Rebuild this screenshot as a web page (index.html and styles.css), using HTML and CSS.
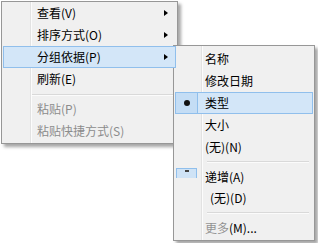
FILE: index.html
```html
<!DOCTYPE html>
<html lang="zh-CN">
<head>
    <meta charset="UTF-8">
    <title>分组依据</title>
    <link rel="stylesheet" href="styles.css">
</head>
<body>
    <!-- Menu principal -->
    <div class="menu main">
        <div class="item"><span>查看(V)</span><span class="arrow"></span></div>
        <div class="item"><span>排序方式(O)</span><span class="arrow"></span></div>
        <div class="item active"><span>分组依据(P)</span><span class="arrow"></span></div>
        <div class="item"><span>刷新(E)</span></div>
        <div class="sep"></div>
        <div class="item disabled"><span>粘贴(P)</span></div>
        <div class="item disabled"><span>粘贴快捷方式(S)</span></div>
    </div>

    <!-- Submenu -->
    <div class="menu sub">
        <div class="item"><span>名称</span></div>
        <div class="item"><span>修改日期</span></div>
        <div class="item active checked"><span class="check"><i class="dot"></i></span><span>类型</span></div>
        <div class="item"><span>大小</span></div>
        <div class="item"><span>(无)(N)</span></div>
        <div class="sep"></div>
        <div class="item low"><span class="ghost-check"></span><span>递增(A)</span></div>
        <div class="item shifted"><span>(无)(D)</span></div>
        <div class="sep"></div>
        <div class="item low"><span class="faded">更多</span><span>(M)...</span></div>
    </div>
</body>
</html>
```

FILE: styles.css
```css
body {
    margin: 0;
    width: 318px;
    height: 243px;
    overflow: hidden;
    position: relative;
    background: #fff;
    font-family: "Noto Sans CJK SC", "Noto Sans", sans-serif;
    font-size: 12px;
    color: #000;
}

/* Menus */
.menu {
    position: relative;
    background: #f0f0f0;
    border: 1px solid #979797;
    box-shadow: 3px 3px 3px rgba(0, 0, 0, 0.35);
    box-sizing: border-box;
}

.menu::before {
    content: "";
    position: absolute;
    top: 0;
    bottom: 0;
    width: 1px;
    background: #e2e2e2;
    border-right: 1px solid #fcfcfc;
}

.main {
    margin: 1px 0 0 1px;
    width: 177px;
    padding: 0 0 1px;
}

.main::before {
    left: 28px;
}

.sub {
    position: absolute;
    left: 173px;
    top: 45px;
    width: 142px;
    padding: 2px 0;
}

.sub::before {
    left: 27px;
}

.item {
    position: relative;
    height: 22px;
    margin: 0 1px;
    padding-left: 33px;
    border: 1px solid transparent;
    box-sizing: border-box;
    display: flex;
    align-items: center;
    white-space: nowrap;
    line-height: 1;
    z-index: 1;
}

.sub .item {
    padding-left: 29px;
}

.item.active {
    background: #d3e6f8;
    border-color: #90bfec;
}

.item.disabled {
    color: #8c8c8c;
}

.arrow {
    margin-left: auto;
    margin-right: 7px;
    width: 0;
    height: 0;
    border-left: 4px solid #000;
    border-top: 3.5px solid transparent;
    border-bottom: 3.5px solid transparent;
}

/* Separadores */
.sep {
    position: relative;
    height: 8px;
    z-index: 1;
}

.sep::after {
    content: "";
    position: absolute;
    top: 4px;
    left: 30px;
    right: 4px;
    height: 1px;
    background: #d9d9d9;
    border-bottom: 1px solid #fbfbfb;
}

.sub .sep {
    height: 7px;
}

.sub .sep::after {
    top: 3px;
    left: 33px;
    right: 5px;
}

/* Marca de seleção */
.check {
    position: absolute;
    left: -1px;
    top: -1px;
    bottom: -1px;
    width: 21px;
    border: 1px solid #90bfec;
    background: #c4ddf5;
    display: flex;
    align-items: center;
    justify-content: center;
}

.dot {
    width: 6px;
    height: 6px;
    border-radius: 50%;
    background: #111;
}

.ghost-check {
    position: absolute;
    left: 0;
    top: 2px;
    width: 19px;
    height: 9px;
    background: #cfe3f6;
    border: 1px solid #90bfec;
    border-bottom: none;
}

.ghost-check::after {
    content: "";
    position: absolute;
    left: 8px;
    top: 1px;
    width: 4px;
    height: 2px;
    background: #444;
}

.item.low {
    padding-top: 2px;
}

.shifted {
    padding-left: 34px !important;
}

.faded {
    opacity: 0.4;
}
```
